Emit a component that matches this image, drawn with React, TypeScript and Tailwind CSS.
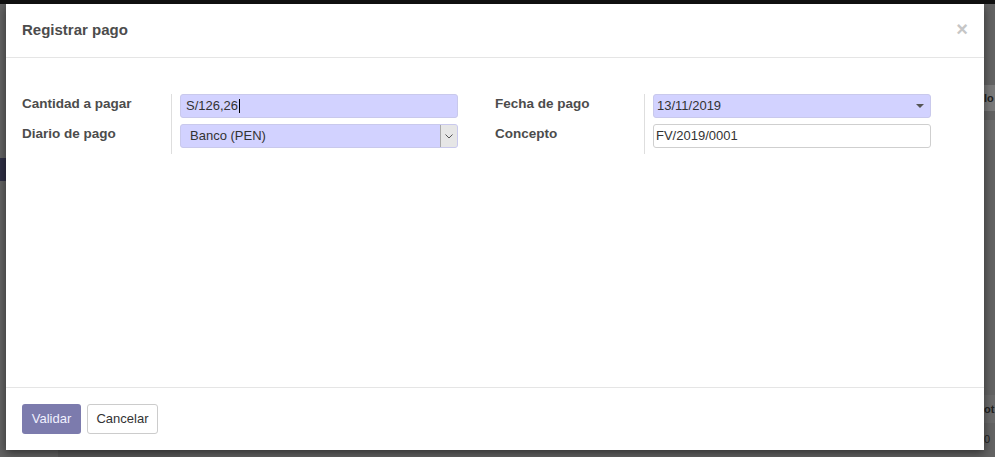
import React from 'react'

const font = { fontFamily: '"Liberation Sans", Arial, sans-serif' }

function Caret() {
  return <span className="inline-block h-[14px] w-px bg-black align-middle ml-px" aria-hidden />
}

export default function App() {
  return (
    <div className="relative h-[457px] w-[995px] overflow-hidden bg-[#636363]" style={font}>
      {/* dimmed page behind the dialog */}
      <div className="absolute inset-x-0 top-0 h-[4px] bg-[#111]" />
      <div className="absolute left-0 top-[158px] h-[23px] w-[6px] bg-[#2f3046]" />
      <div className="absolute right-0 top-[85px] h-[26px] w-[11px] bg-[#7a7a7a] text-[11px] font-bold text-[#222] leading-[26px]">lo</div>
      <div className="absolute right-0 top-[120px] h-[20px] w-[11px] bg-[#6c6c6c]" />
      <div className="absolute right-0 top-[395px] h-[28px] w-[11px] bg-[#6a6a6a] text-[11px] font-bold text-[#222] leading-[28px]">ot</div>
      <div className="absolute right-0 top-[428px] h-[22px] w-[11px] text-[11px] text-[#222] leading-[22px]">0</div>
      <div className="absolute left-[58px] top-[450px] h-[7px] w-[122px] bg-[#5a5a5a]" />

      <div className="pl-[6px] pt-[4px]">
        <div className="relative flex h-[446px] w-[978px] flex-col bg-white shadow-[0_3px_9px_rgba(0,0,0,0.5)]">
          {/* header */}
          <div className="flex h-[54px] shrink-0 items-center justify-between border-b border-[#e5e5e5] pl-[16px] pr-[16px]">
            <h4 className="text-[15px] font-bold text-[#4c4c4c]">Registrar pago</h4>
            <span className="mb-[3px] text-[20px] font-bold leading-none text-[#c6c6c6]">×</span>
          </div>

          {/* body */}
          <div className="flex flex-1 items-start pl-[16px] pt-[36px]">
            <div className="flex">
              <div className="flex w-[149px] flex-col gap-[6px] text-[13.5px] font-bold text-[#4c4c4c]">
                <div className="h-[24px] leading-[19px]">Cantidad a pagar</div>
                <div className="h-[24px] leading-[19px]">Diario de pago</div>
              </div>
              <div className="flex flex-col gap-[6px] border-l border-[#dedede] pb-[6px] pl-[8px] text-[13px] text-[#333]">
                <div className="flex h-[24px] w-[278px] items-center rounded-[3px] border border-[#c9c9ec] bg-[#d2d2ff] px-[5px]">
                  S/126,26
                  <Caret />
                </div>
                <div className="flex h-[24px] w-[278px] items-stretch rounded-[3px] border border-[#c9c9ec] bg-[#d2d2ff]">
                  <span className="flex flex-1 items-center pl-[9px]">Banco (PEN)</span>
                  <span className="flex w-[17px] items-center justify-center rounded-r-[2px] border-l border-[#a8a8a8] bg-[#e6e6e6]">
                    <svg width="8" height="5" viewBox="0 0 8 5" fill="none" stroke="#555" strokeWidth="1">
                      <path d="M0.5 0.5 4 4 7.5 0.5" />
                    </svg>
                  </span>
                </div>
              </div>
            </div>

            <div className="ml-[37px] flex">
              <div className="flex w-[149px] flex-col gap-[6px] text-[13.5px] font-bold text-[#4c4c4c]">
                <div className="h-[24px] leading-[19px]">Fecha de pago</div>
                <div className="h-[24px] leading-[19px]">Concepto</div>
              </div>
              <div className="flex flex-col gap-[6px] border-l border-[#dedede] pb-[6px] pl-[8px] text-[13px] text-[#333]">
                <div className="flex h-[24px] w-[278px] items-center justify-between rounded-[3px] border border-[#c9c9ec] bg-[#d2d2ff] pl-[3px] pr-[6px]">
                  13/11/2019
                  <svg width="8" height="4" viewBox="0 0 8 4" fill="#555">
                    <path d="M0 0h8L4 4z" />
                  </svg>
                </div>
                <div className="flex h-[24px] w-[278px] items-center rounded-[3px] border border-[#cfcfcf] bg-white pl-[2px]">
                  FV/2019/0001
                </div>
              </div>
            </div>
          </div>

          {/* footer */}
          <div className="flex h-[63px] shrink-0 items-start gap-[6px] border-t border-[#e5e5e5] pl-[16px] pt-[16px] text-[13px]">
            <button className="h-[30px] w-[59px] rounded-[3px] bg-[#7c7bad] text-[#f0f0ff]">Validar</button>
            <button className="h-[30px] w-[71px] rounded-[3px] border border-[#cccccc] bg-white text-[#333]">Cancelar</button>
          </div>
        </div>
      </div>
    </div>
  )
}
